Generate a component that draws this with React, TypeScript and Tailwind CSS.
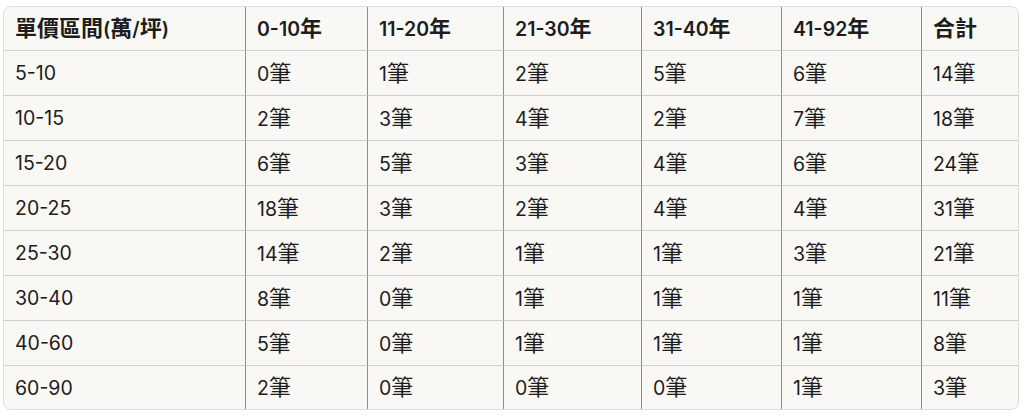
const headers = ["單價區間(萬/坪)", "0-10年", "11-20年", "21-30年", "31-40年", "41-92年", "合計"];

const rows: [string, number[]][] = [
  ["5-10", [0, 1, 2, 5, 6, 14]],
  ["10-15", [2, 3, 4, 2, 7, 18]],
  ["15-20", [6, 5, 3, 4, 6, 24]],
  ["20-25", [18, 3, 2, 4, 4, 31]],
  ["25-30", [14, 2, 1, 1, 3, 21]],
  ["30-40", [8, 0, 1, 1, 1, 11]],
  ["40-60", [5, 0, 1, 1, 1, 8]],
  ["60-90", [2, 0, 0, 0, 1, 3]],
];

// CJK glyphs render a touch larger than the Latin digits in the reference
function Mixed({ text }: { text: string }) {
  const parts = text.match(/[\u3400-\u9fff]+|[^\u3400-\u9fff]+/g) ?? [];
  return (
    <span>
      {parts.map((p, i) =>
        /[\u3400-\u9fff]/.test(p) ? (
          <span key={i} className="text-[22px] leading-[26px]">
            {p}
          </span>
        ) : (
          <span key={i}>{p}</span>
        ),
      )}
    </span>
  );
}

function Cell({
  text,
  last,
  bottom,
  head,
}: {
  text: string;
  last: boolean;
  bottom: boolean;
  head?: boolean;
}) {
  return (
    <div
      className={
        "flex items-center pl-[11px] text-[#1d1d1d] " +
        (head ? "font-semibold " : "") +
        (last ? "" : "border-r border-r-[#8e8e8e] ") +
        (bottom ? "border-b border-b-[#d0d0d0]" : "")
      }
    >
      <Mixed text={text} />
    </div>
  );
}

export default function App() {
  return (
    <div className="h-[416px] w-[1024px] bg-white pl-[3px] pt-[6px]">
      <div
        className="grid w-[1016px] grid-cols-[242px_122px_136px_138px_140px_140px_96px] grid-rows-[44px_repeat(7,45px)_43px] overflow-hidden rounded-lg border border-[#dedede] bg-[#f9f8f5] text-[19.5px] leading-[26px]"
        style={{ fontFamily: 'Inter, "Noto Sans CJK TC", sans-serif' }}
      >
        {headers.map((h, i) => (
          <Cell key={h} text={h} last={i === headers.length - 1} bottom head />
        ))}
        {rows.map(([range, counts], r) => (
          <div key={range} className="contents">
            <Cell text={range} last={false} bottom={r < rows.length - 1} />
            {counts.map((c, i) => (
              <Cell
                key={i}
                text={`${c}筆`}
                last={i === counts.length - 1}
                bottom={r < rows.length - 1}
              />
            ))}
          </div>
        ))}
      </div>
    </div>
  );
}
